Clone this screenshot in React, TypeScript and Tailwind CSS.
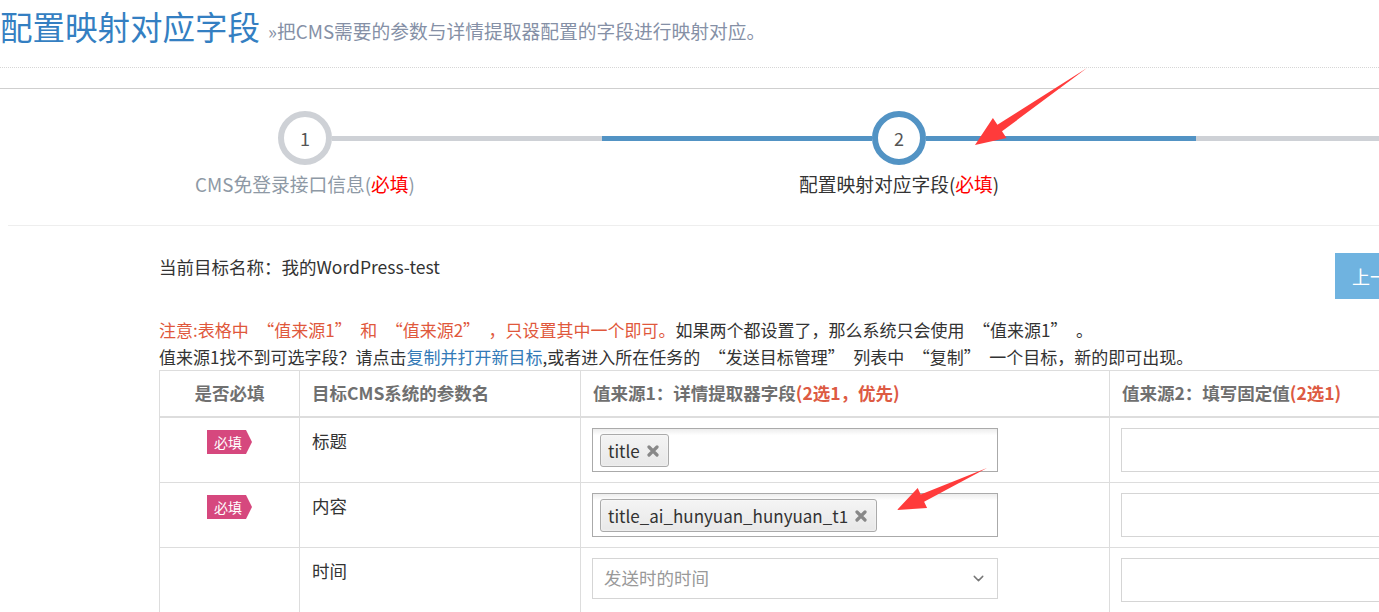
import React from 'react';
import { ChevronDown } from 'lucide-react';

const steps = [
  { n: 1, label: 'CMS免登录接口信息', active: false },
  { n: 2, label: '配置映射对应字段', active: true },
  { n: 3, label: '发送到CMS', active: false },
];

// wide Chinese quotes, like the original font renders them
const Open: React.FC = () => <span className="inline-block w-[1.5em] text-right">“</span>;
const Close: React.FC = () => <span className="inline-block w-[1.5em] text-left">”</span>;

const Badge: React.FC = () => (
  <div className="flex items-center">
    <span className="h-[24px] bg-[#d6487e] pl-[7px] pr-[4px] text-[14px] leading-[24px] text-white">必填</span>
    <span className="h-0 w-0 border-y-[12px] border-l-[6px] border-y-transparent border-l-[#d6487e]"></span>
  </div>
);

const Tag: React.FC<{ text: string }> = ({ text }) => (
  <div className="mt-[5px] ml-[7px] inline-flex h-[33px] items-center gap-[7px] rounded-[3px] border border-[#aaa] bg-gradient-to-b from-[#f4f4f4] to-[#e8e8e8] pl-[7px] pr-[9px] text-[17px] text-[#333] shadow-[inset_0_0_2px_#fff]">
    <span>{text}</span>
    <svg width="12" height="12" viewBox="0 0 12 12" className="mt-[1px]">
      <path d="M2 2 L10 10 M10 2 L2 10" stroke="#888" strokeWidth="3.2" strokeLinecap="round" />
    </svg>
  </div>
);

const rows = [
  { required: true, name: '标题', tag: 'title' },
  { required: true, name: '内容', tag: 'title_ai_hunyuan_hunyuan_t1' },
  { required: false, name: '时间', tag: null },
];

export default function App() {
  return (
    <div className="relative h-[612px] w-[1379px] overflow-hidden bg-white font-['Noto_Sans_CJK_SC','Noto_Sans',sans-serif] text-[#333] [text-spacing-trim:space-all]">
      {/* page header */}
      <div className="flex h-[68px] items-start border-b border-dotted border-[#d6d6d6] pt-[4px]">
        <span className="text-[32.5px] leading-[44px] text-[#347fc2]">配置映射对应字段</span>
        <span className="ml-[8px] mt-[14px] whitespace-nowrap text-[18.75px] leading-[26px] text-[#8590a6]">»把CMS需要的参数与详情提取器配置的字段进行映射对应。</span>
      </div>
      <div className="h-[20px]"></div>

      {/* wizard steps */}
      <div className="border-t border-[#cfcfcf]">
        <div className="ml-[8px] flex h-[137px] border-b border-[#eee] pt-[22px]">
          {steps.map((s, i) => {
            const leftColor = i === 0 ? 'bg-transparent' : s.active ? 'bg-[#5293c4]' : 'bg-[#ced1d6]';
            const rightColor = s.active ? 'bg-[#5293c4]' : 'bg-[#ced1d6]';
            return (
              <div key={s.n} className="flex w-[594px] shrink-0 flex-col items-center">
                <div className="flex w-full items-center">
                  <div className={`h-[5px] flex-1 ${leftColor}`}></div>
                  <div
                    className={`flex h-[54px] w-[54px] items-center justify-center rounded-full border-[6px] bg-white text-[18px] text-[#555] ${
                      s.active ? 'border-[#5293c4]' : 'border-[#ced1d6]'
                    }`}
                  >
                    {s.n}
                  </div>
                  <div className={`h-[5px] flex-1 ${rightColor}`}></div>
                </div>
                <div className={`mt-[6px] whitespace-nowrap text-[18.75px] leading-[26px] ${s.active ? 'text-[#333]' : 'text-[#8e99a5]'}`}>
                  {s.label}(<span className="text-[#f00]">必填</span>)
                </div>
              </div>
            );
          })}
        </div>
      </div>

      {/* content */}
      <div className="pl-[159px] text-[17px]">
        <div className="flex w-[1262px] items-start">
          <div className="pt-[29px] text-[17.5px] leading-[24px]">当前目标名称：我的WordPress-test</div>
          <button className="ml-auto mt-[27px] h-[46px] w-[86px] bg-[#6fb3e0] pl-[17px] text-left text-[18px] text-white">上一步</button>
        </div>

        <div className="mt-[17px] whitespace-nowrap leading-[27px]">
          <div>
            <span className="text-[#e0583c]">
              注意:表格中<Open />值来源1<Close />和<Open />值来源2<Close />，只设置其中一个即可。
            </span>
            如果两个都设置了，那么系统只会使用<Open />值来源1<Close />。
          </div>
          <div>
            值来源1找不到可选字段？请点击<span className="text-[#337ab7]">复制并打开新目标</span>,或者进入所在任务的<Open />发送目标管理<Close />列表中<Open />复制<Close />一个目标，新的即可出现。
          </div>
        </div>

        {/* mapping table */}
        <div className="w-[1250px] border-l border-t border-[#ddd] text-[17.5px]">
          <div className="grid h-[47px] grid-cols-[140px_281px_529px_300px] border-b-2 border-[#ddd] font-bold text-[#707070]">
            <div className="flex items-center justify-center border-r border-[#ddd]">是否必填</div>
            <div className="flex items-center border-r border-[#ddd] pl-[12px]">目标CMS系统的参数名</div>
            <div className="flex items-center whitespace-nowrap border-r border-[#ddd] pl-[12px]">
              值来源1：详情提取器字段<span className="text-[#dd5a43]">(2选1，优先)</span>
            </div>
            <div className="flex items-center whitespace-nowrap border-r border-[#ddd] pl-[12px]">
              值来源2：填写固定值<span className="text-[#dd5a43]">(2选1)</span>
            </div>
          </div>
          {rows.map((r) => (
            <div key={r.name} className="grid h-[65px] grid-cols-[140px_281px_529px_300px] border-b border-[#ddd]">
              <div className="flex items-start justify-center border-r border-[#ddd] pt-[12px]">{r.required && <Badge />}</div>
              <div className="border-r border-[#ddd] pl-[12px] pt-[10px] leading-[26px]">{r.name}</div>
              <div className="border-r border-[#ddd] pl-[11px] pt-[10px]">
                {r.tag ? (
                  <div className="h-[44px] w-[406px] border border-[#aaa] bg-gradient-to-b from-[#eee] from-[1%] to-[#fff] to-[15%]">
                    <Tag text={r.tag} />
                  </div>
                ) : (
                  <div className="flex h-[41px] w-[406px] items-center justify-between border border-[#d5d5d5] pl-[11px] pr-[10px] text-[#999]">
                    <span>发送时的时间</span>
                    <ChevronDown size={17} strokeWidth={2} className="text-[#777]" />
                  </div>
                )}
              </div>
              <div className="border-r border-[#ddd] pl-[11px] pt-[10px]">
                <div className="h-[44px] w-[280px] border border-[#d5d5d5]"></div>
              </div>
            </div>
          ))}
        </div>
      </div>

      {/* red annotation arrows drawn on the screenshot */}
      <svg className="pointer-events-none absolute left-0 top-0" width="1379" height="612" viewBox="0 0 1379 612">
        <polygon points="1087,68 1002,131.3 1006.5,137.9 975,145 992.9,118.1 997.4,124.7" fill="#ff3b3b" />
        <polygon points="987,468 924.1,501.7 927.1,508.1 897,510 917.7,488.1 920.7,494.5" fill="#ff3b3b" />
      </svg>
    </div>
  );
}
